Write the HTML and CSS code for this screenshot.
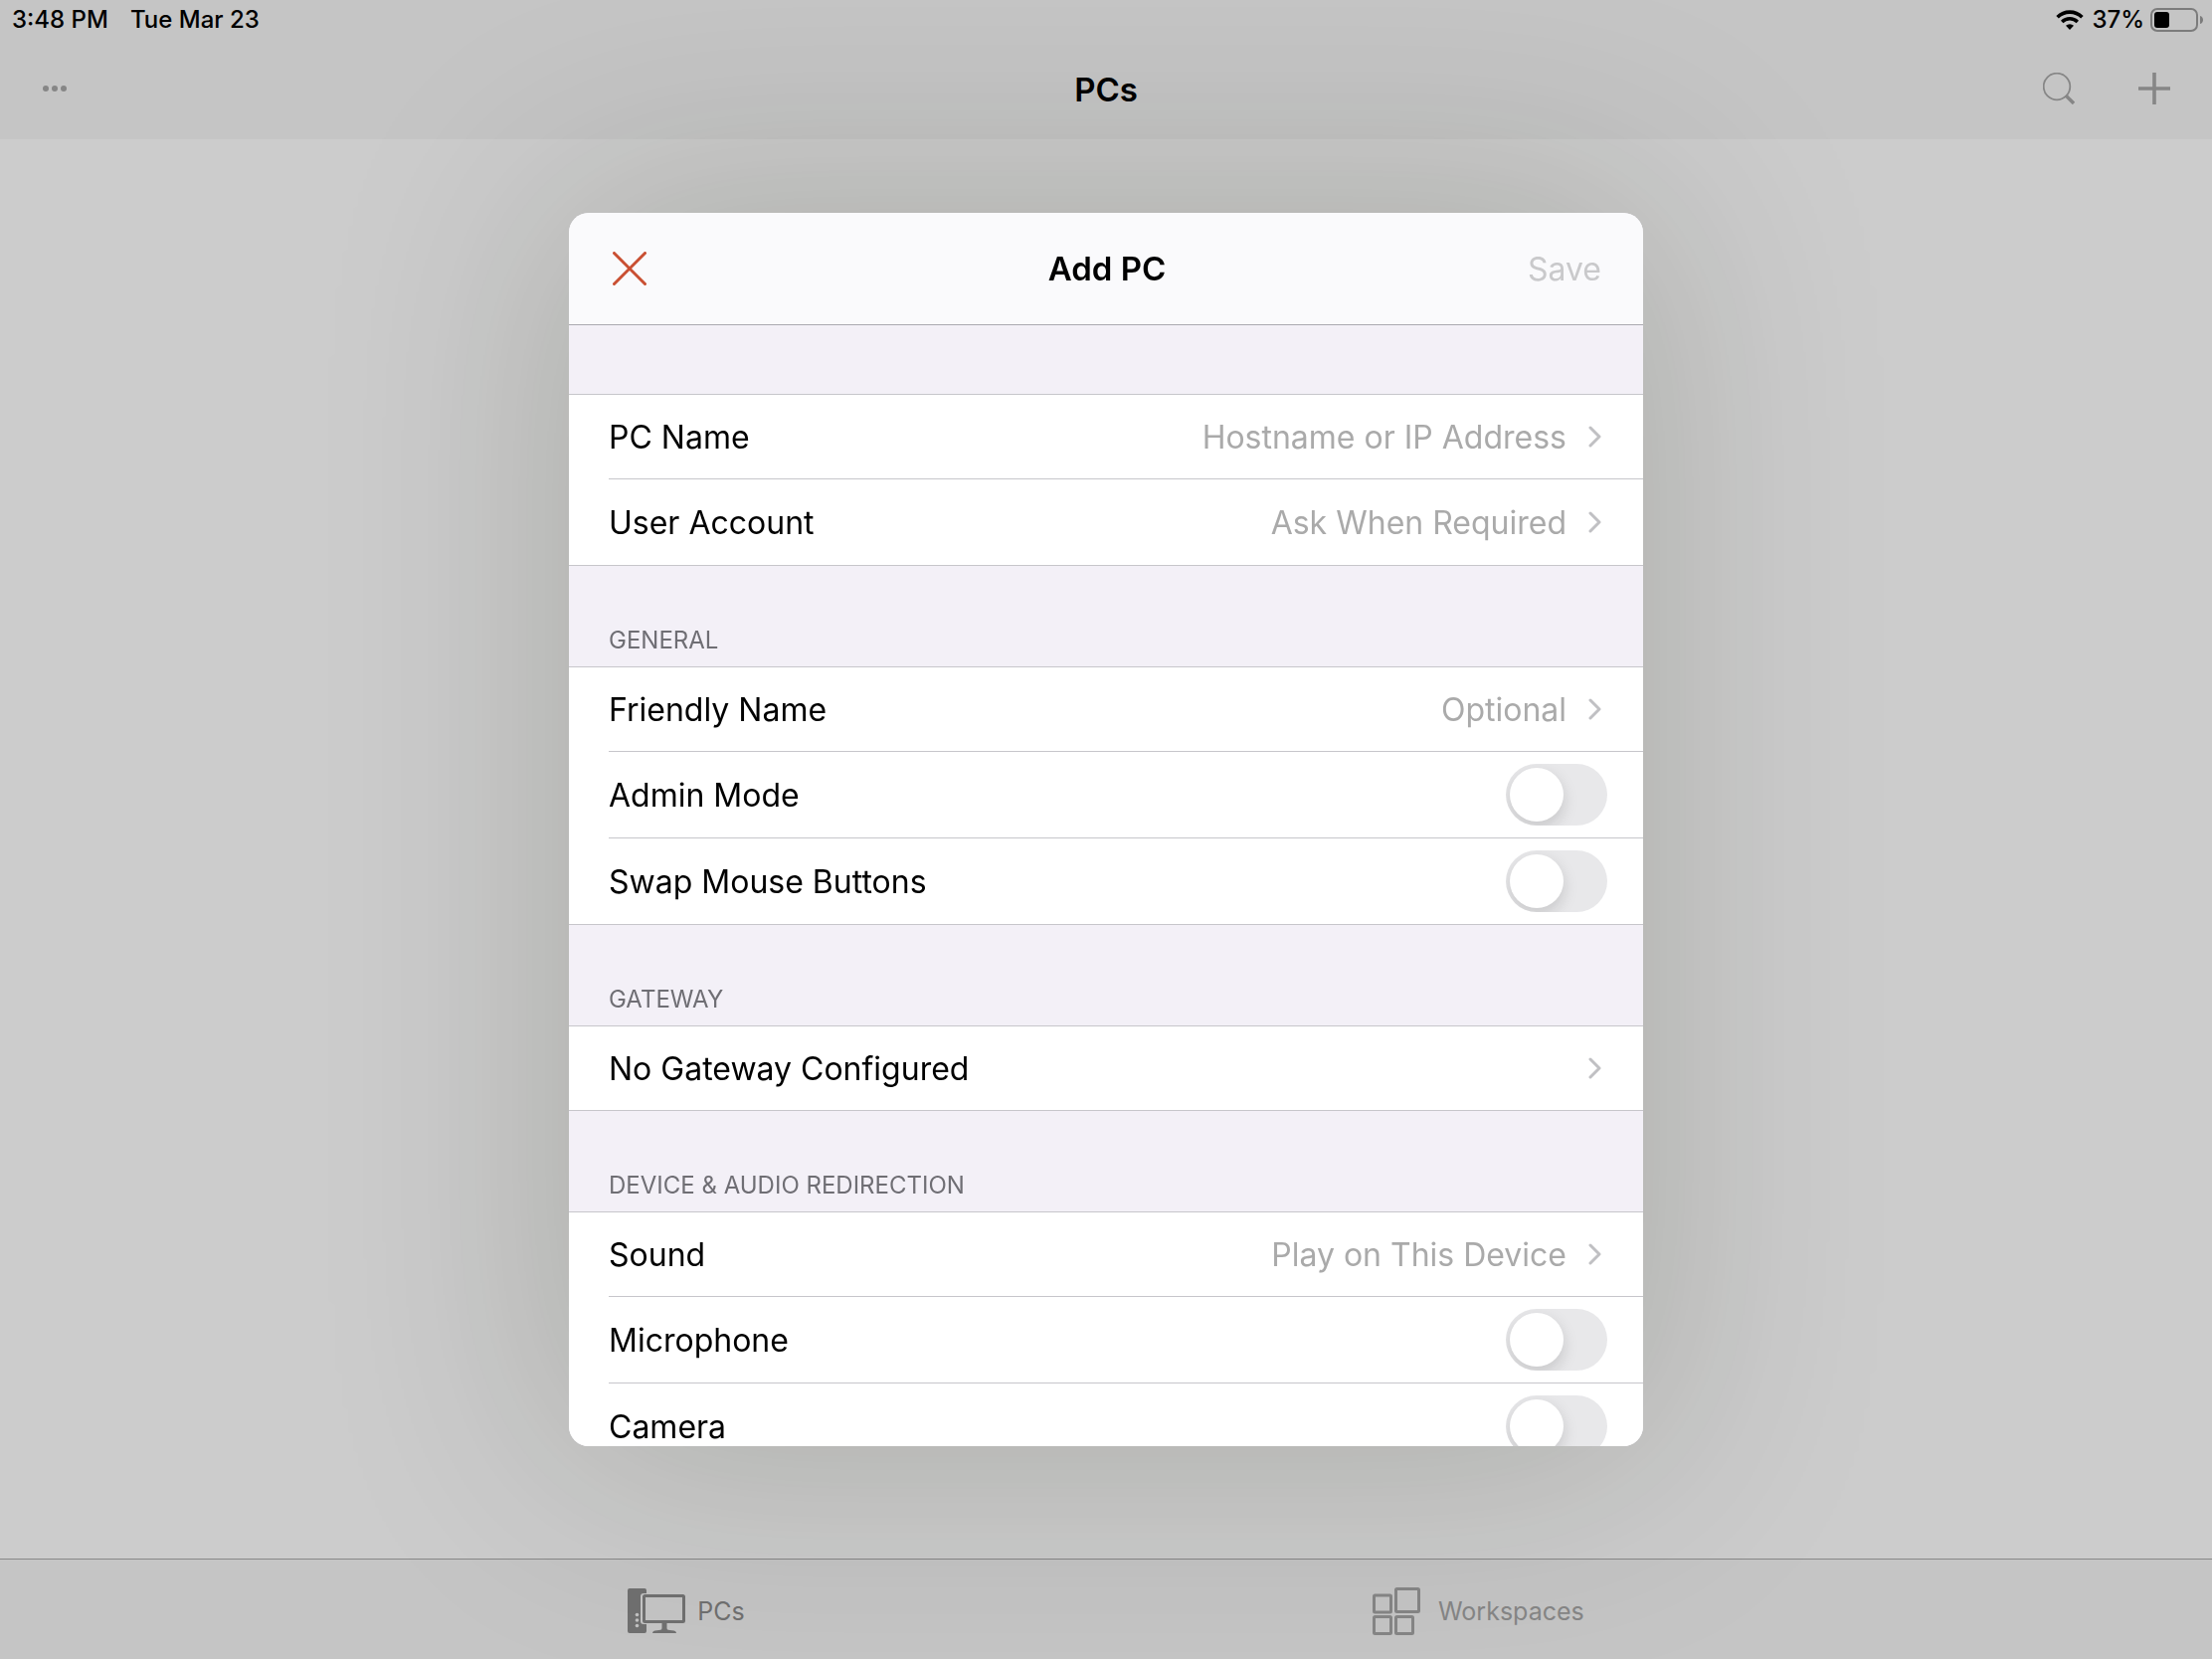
FILE: index.html
```html
<!DOCTYPE html>
<html lang="en">
<head>
    <meta charset="UTF-8">
    <meta name="viewport" content="width=device-width, initial-scale=1.0">
    <title>Add PC</title>
    <link rel="stylesheet" href="styles.css">
</head>
<body>
    <header class="top">
        <div class="status-bar">
            <div class="status-left">
                <span>3:48 PM</span>
                <span>Tue Mar 23</span>
            </div>
            <div class="status-right">
                <svg class="wifi" width="28" height="20" viewBox="0 0 28 20">
                    <path d="M1.6 7.2a17.6 17.6 0 0 1 24.8 0" fill="none" stroke="#000" stroke-width="3.6"/>
                    <path d="M6.2 12a11 11 0 0 1 15.6 0" fill="none" stroke="#000" stroke-width="3.4"/>
                    <path d="M14 20l-4-4.2a5.8 5.8 0 0 1 8 0z"/>
                </svg>
                <span>37%</span>
                <svg class="battery" width="54" height="24" viewBox="0 0 54 24">
                    <rect x="1" y="1" width="46" height="22" rx="6" fill="none" stroke="#7c7c7c" stroke-width="2"/>
                    <rect x="4" y="4" width="15" height="16" rx="3"/>
                    <path d="M50 8c4 1 4 7 0 8z" fill="#7c7c7c"/>
                </svg>
            </div>
        </div>
        <nav class="nav-bar">
            <button class="icon-button" aria-label="More">
                <svg width="26" height="32" viewBox="0 0 26 32" fill="#868686">
                    <circle cx="4" cy="16" r="3"/>
                    <circle cx="13" cy="16" r="3"/>
                    <circle cx="22" cy="16" r="3"/>
                </svg>
            </button>
            <h1>PCs</h1>
            <div class="nav-actions">
                <button class="icon-button" aria-label="Search">
                    <svg width="32" height="32" viewBox="0 0 32 32" fill="none" stroke="#868686">
                        <circle cx="14" cy="14" r="13.3" stroke-width="1.8"/>
                        <path d="M23 23l8 8" stroke-width="3.4"/>
                    </svg>
                </button>
                <button class="icon-button" aria-label="Add">
                    <svg width="32" height="32" viewBox="0 0 32 32" fill="none" stroke="#868686" stroke-width="3.6">
                        <path d="M16 0v32M0 16h32"/>
                    </svg>
                </button>
            </div>
        </nav>
    </header>

    <main class="desktop"></main>

    <nav class="tab-bar">
        <a class="tab active" href="#pcs">
            <svg width="58" height="45" viewBox="0 0 58 45">
                <path d="M2 0h15a2 2 0 0 1 2 2v3h-3a3 3 0 0 0-3 3v25a3 3 0 0 0 3 3h3v7a2 2 0 0 1-2 2H2a2 2 0 0 1-2-2V2a2 2 0 0 1 2-2z" fill="#707070"/>
                <circle cx="9.500" cy="26.500" r="1.800" fill="#c3c3c3"/>
                <circle cx="9.500" cy="32" r="1.800" fill="#c3c3c3"/>
                <circle cx="9.500" cy="37.500" r="1.800" fill="#c3c3c3"/>
                <rect x="16.500" y="7.500" width="40" height="26" rx="1" fill="none" stroke="#707070" stroke-width="3"/>
                <path d="M34.500 34h5v6c0 2 2 2 5 2.200 3 .2 4.500 1 4.500 2.800H25c0-1.800 1.500-2.600 4.500-2.800 3-.2 5-.2 5-2.200z" fill="#707070"/>
            </svg>
            <span>PCs</span>
        </a>
        <a class="tab" href="#workspaces">
            <svg width="48" height="48" viewBox="0 0 48 48" fill="none" stroke="#868686" stroke-width="3">
                <rect x="1.500" y="8" width="17" height="17" rx="1"/>
                <rect x="23.500" y="1.500" width="23" height="23" rx="1"/>
                <rect x="1.500" y="29.500" width="17" height="17" rx="1"/>
                <rect x="23.500" y="29.500" width="17" height="17" rx="1"/>
            </svg>
            <span>Workspaces</span>
        </a>
    </nav>

    <div class="overlay">
        <section class="modal" role="dialog" aria-labelledby="modal-title">
            <header class="modal-header">
                <button class="icon-button close" aria-label="Close">
                    <svg width="34" height="34" viewBox="0 0 34 34" fill="none" stroke="#c94f32" stroke-width="3" stroke-linecap="round">
                        <path d="M1.500 1.500l31 31M32.500 1.500l-31 31"/>
                    </svg>
                </button>
                <h2 id="modal-title">Add PC</h2>
                <button class="save" disabled>Save</button>
            </header>

            <form class="modal-body">
                <div class="spacer"></div>
                <div class="group">
                    <button type="button" class="row">
                        <span>PC Name</span>
                        <span class="value">Hostname or IP Address</span>
                        <svg class="chevron" viewBox="0 0 14 22"><path d="M2 2l9 9-9 9"/></svg>
                    </button>
                    <button type="button" class="row">
                        <span>User Account</span>
                        <span class="value">Ask When Required</span>
                        <svg class="chevron" viewBox="0 0 14 22"><path d="M2 2l9 9-9 9"/></svg>
                    </button>
                </div>

                <h3>General</h3>
                <div class="group">
                    <button type="button" class="row">
                        <span>Friendly Name</span>
                        <span class="value">Optional</span>
                        <svg class="chevron" viewBox="0 0 14 22"><path d="M2 2l9 9-9 9"/></svg>
                    </button>
                    <div class="row">
                        <label for="admin">Admin Mode</label>
                        <input class="switch" type="checkbox" id="admin">
                    </div>
                    <div class="row">
                        <label for="swap">Swap Mouse Buttons</label>
                        <input class="switch" type="checkbox" id="swap">
                    </div>
                </div>

                <h3>Gateway</h3>
                <div class="group">
                    <button type="button" class="row">
                        <span>No Gateway Configured</span>
                        <span class="value"></span>
                        <svg class="chevron" viewBox="0 0 14 22"><path d="M2 2l9 9-9 9"/></svg>
                    </button>
                </div>

                <h3>Device &amp; Audio Redirection</h3>
                <div class="group">
                    <button type="button" class="row">
                        <span>Sound</span>
                        <span class="value">Play on This Device</span>
                        <svg class="chevron" viewBox="0 0 14 22"><path d="M2 2l9 9-9 9"/></svg>
                    </button>
                    <div class="row">
                        <label for="microphone">Microphone</label>
                        <input class="switch" type="checkbox" id="microphone">
                    </div>
                    <div class="row">
                        <label for="camera">Camera</label>
                        <input class="switch" type="checkbox" id="camera">
                    </div>
                </div>
            </form>
        </section>
    </div>
</body>
</html>
```
FILE: styles.css
```css
* {
    box-sizing: border-box;
}

body {
    margin: 0;
    height: 100vh;
    display: flex;
    flex-direction: column;
    overflow: hidden;
    font-family: Inter, "Liberation Sans", sans-serif;
    font-size: 32px;
    color: #000;
    background-color: #cccccc;
}

h1, h2, h3 {
    margin: 0;
}

button {
    font: inherit;
    color: inherit;
    background: none;
    border: none;
    padding: 0;
    cursor: pointer;
}

svg {
    display: block;
    flex: none;
}

.top {
    background-color: #c5c5c5;
}

.status-bar {
    display: flex;
    justify-content: space-between;
    height: 40px;
    padding: 0 8px 0 12px;
    font-size: 24px;
    font-weight: 500;
    line-height: 40px;
}

.status-left {
    display: flex;
    gap: 22px;
}

.status-right {
    display: flex;
    align-items: center;
    gap: 8px;
}

.battery {
    margin-left: -2px;
}

.nav-bar {
    display: grid;
    grid-template-columns: 1fr auto 1fr;
    align-items: center;
    height: 100px;
    padding: 0 42px;
}

.nav-bar .icon-button {
    margin-bottom: 2px;
}

h1, h2 {
    font-size: 33px;
    font-weight: 600;
}

.nav-actions {
    display: flex;
    justify-content: flex-end;
    gap: 64px;
}

.nav-bar .icon-button:first-child {
    justify-self: start;
}

.desktop {
    flex: 1;
}

.tab-bar {
    display: flex;
    justify-content: space-evenly;
    align-items: center;
    height: 101px;
    padding-top: 3px;
    border-top: 1px solid #888888;
    background-color: #c5c5c5;
}

.tab {
    display: flex;
    align-items: center;
    gap: 18px;
    font-size: 25px;
    color: #868686;
    text-decoration: none;
}

.tab.active {
    gap: 12px;
    color: #707070;
}

/* modal */
.overlay {
    position: fixed;
    inset: 0;
    display: flex;
    justify-content: center;
    padding: 214px 40px;
}

.modal {
    display: flex;
    flex-direction: column;
    width: 100%;
    max-width: 1080px;
    border-radius: 20px;
    overflow: hidden;
    background-color: #f3f0f7;
    box-shadow: 0 0 240px 10px rgba(20, 28, 6, 0.18);
}

.modal-header {
    display: grid;
    grid-template-columns: 1fr auto 1fr;
    align-items: center;
    flex: none;
    height: 113px;
    padding: 0 42px 0 44px;
    background-color: #fafafc;
    border-bottom: 1px solid #aaa9b0;
}

.close {
    justify-self: start;
}

.save {
    justify-self: end;
    color: #c9c9cb;
}

.modal-body {
    flex: 1;
    min-height: 0;
    overflow-y: auto;
    scrollbar-width: none;
}

.spacer {
    height: 69px;
}

.group {
    padding-left: 40px;
    background-color: #fff;
    border-top: 1px solid #c7c6cb;
    border-bottom: 1px solid #c7c6cb;
}

.row {
    display: flex;
    align-items: center;
    width: 100%;
    height: 87px;
    padding-right: 36px;
    border-top: 1px solid #c7c6cb;
    text-align: left;
}

.row:first-child {
    height: 84px;
    border-top: none;
}

.row label {
    flex: 1;
}

.value {
    flex: 1;
    text-align: right;
    color: #aaaaaa;
}

.chevron {
    width: 14px;
    height: 22px;
    margin: 0 5px 0 22px;
    fill: none;
    stroke: #c0c0c3;
    stroke-width: 3;
    stroke-linecap: round;
    stroke-linejoin: round;
}

h3 {
    height: 101px;
    padding: 59px 40px 0;
    font-size: 24px;
    font-weight: 400;
    line-height: 32px;
    text-transform: uppercase;
    color: #6f6e74;
}

.switch {
    appearance: none;
    width: 102px;
    height: 62px;
    margin: 0;
    padding: 4px;
    border-radius: 31px;
    background-color: #e8e8ea;
    overflow: hidden;
    cursor: pointer;
}

.switch::before {
    content: "";
    display: block;
    width: 54px;
    height: 54px;
    border-radius: 50%;
    background-color: #fff;
    box-shadow: 0 6px 16px rgba(0, 0, 0, 0.15);
}

.switch:checked {
    background-color: #34c759;
}

.switch:checked::before {
    margin-left: 40px;
}
```
